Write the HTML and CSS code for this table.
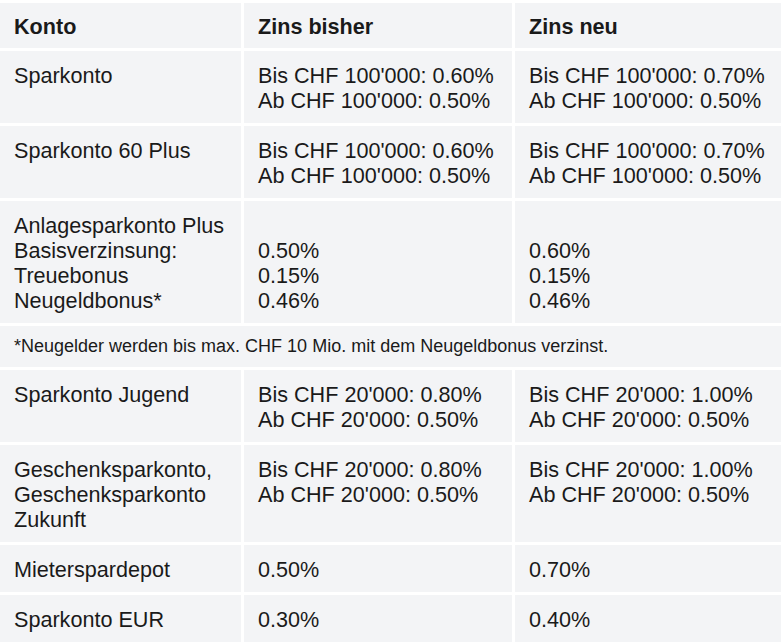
FILE: index.html
```html
<!DOCTYPE html>
<html lang="de">
<head>
<meta charset="utf-8">
<title>Zinssätze</title>
<link rel="stylesheet" href="styles.css">
</head>
<body>
<div class="wrap">
<table class="rates">
  <colgroup>
    <col class="c1">
    <col class="c2">
    <col class="c3">
  </colgroup>
  <thead>
    <tr>
      <th>Konto</th>
      <th>Zins bisher</th>
      <th>Zins neu</th>
    </tr>
  </thead>
  <tbody>
    <tr>
      <td>Sparkonto</td>
      <td>Bis CHF 100'000: 0.60%<br>Ab CHF 100'000: 0.50%</td>
      <td>Bis CHF 100'000: 0.70%<br>Ab CHF 100'000: 0.50%</td>
    </tr>
    <tr>
      <td>Sparkonto 60 Plus</td>
      <td>Bis CHF 100'000: 0.60%<br>Ab CHF 100'000: 0.50%</td>
      <td>Bis CHF 100'000: 0.70%<br>Ab CHF 100'000: 0.50%</td>
    </tr>
    <tr>
      <td>Anlagesparkonto Plus<br>Basisverzinsung:<br>Treuebonus<br>Neugeldbonus*</td>
      <td><br>0.50%<br>0.15%<br>0.46%</td>
      <td><br>0.60%<br>0.15%<br>0.46%</td>
    </tr>
    <tr>
      <td class="note" colspan="3">*Neugelder werden bis max. CHF 10 Mio. mit dem Neugeldbonus verzinst.</td>
    </tr>
    <tr>
      <td>Sparkonto Jugend</td>
      <td>Bis CHF 20'000: 0.80%<br>Ab CHF 20'000: 0.50%</td>
      <td>Bis CHF 20'000: 1.00%<br>Ab CHF 20'000: 0.50%</td>
    </tr>
    <tr>
      <td>Geschenksparkonto,<br>Geschenksparkonto<br>Zukunft</td>
      <td>Bis CHF 20'000: 0.80%<br>Ab CHF 20'000: 0.50%</td>
      <td>Bis CHF 20'000: 1.00%<br>Ab CHF 20'000: 0.50%</td>
    </tr>
    <tr>
      <td>Mieterspardepot</td>
      <td>0.50%</td>
      <td>0.70%</td>
    </tr>
    <tr>
      <td>Sparkonto EUR</td>
      <td>0.30%</td>
      <td>0.40%</td>
    </tr>
  </tbody>
</table>
</div>
</body>
</html>
```

FILE: styles.css
```css
html, body {
  margin: 0;
  padding: 0;
  background: #ffffff;
  overflow: hidden;
}

.wrap {
  width: 783px;
  overflow: hidden;
}

.rates {
  margin: 0 0 0 -3px;
  width: 787px;
  table-layout: fixed;
  border-collapse: separate;
  border-spacing: 3px;
  font-family: "Liberation Sans", Arial, sans-serif;
  font-size: 21.6px;
  line-height: 25px;
  color: #1a1a1a;
}

.c1 { width: 241px; }
.c2 { width: 268px; }
.c3 { width: 266px; }

.rates th,
.rates td {
  background: #f3f4f6;
  text-align: left;
  vertical-align: top;
  padding: 12px 14px 10px;
}

.rates th {
  font-weight: bold;
  padding: 11px 14px 9px;
}

.rates td.note {
  font-size: 18px;
  line-height: 21px;
  padding: 10px 14px 10px;
}
```
